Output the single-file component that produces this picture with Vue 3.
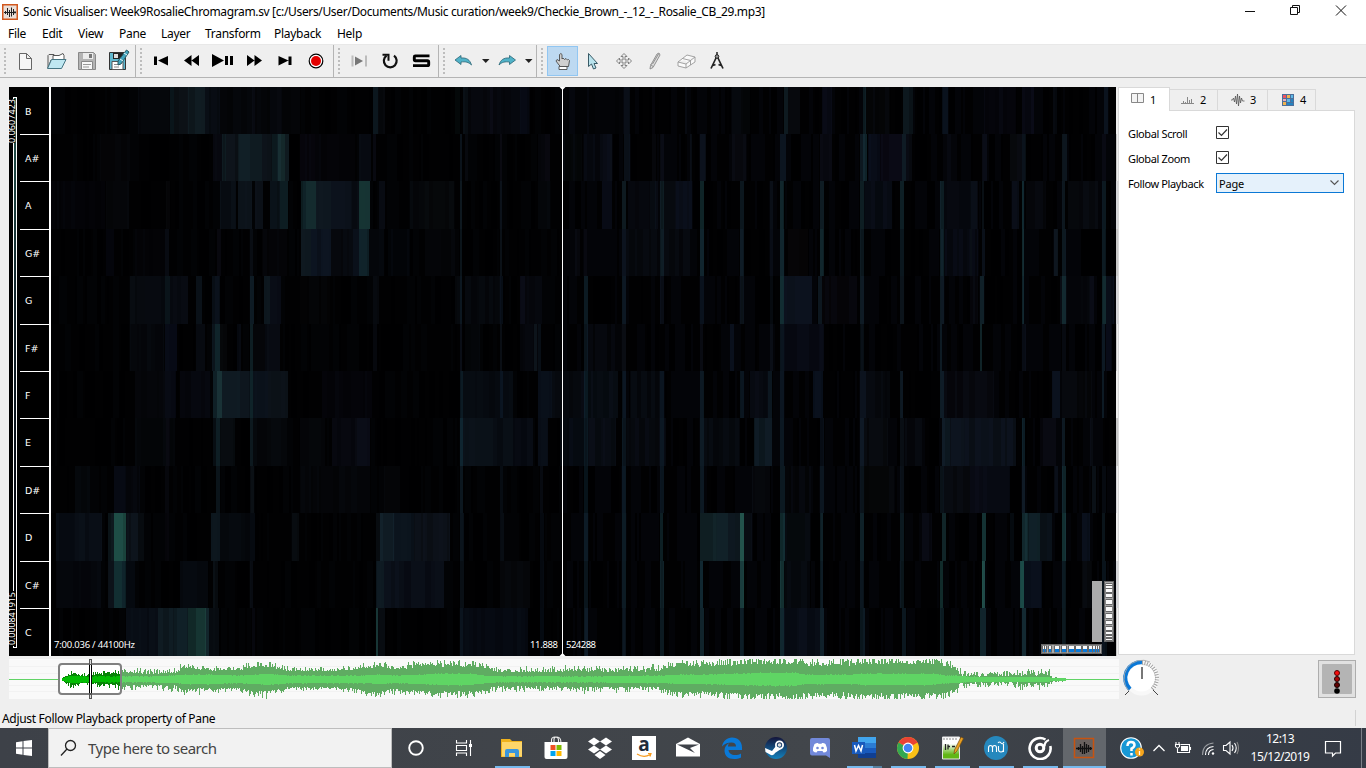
<script setup>
const menus = [
  { t: 'File', w: 34 }, { t: 'Edit', w: 36 }, { t: 'View', w: 41 }, { t: 'Pane', w: 42 },
  { t: 'Layer', w: 44 }, { t: 'Transform', w: 69 }, { t: 'Playback', w: 63 }, { t: 'Help', w: 40 },
]

const notes = ['B', 'A#', 'A', 'G#', 'G', 'F#', 'F', 'E', 'D#', 'D', 'C#', 'C']
const labelX = 25
const rowY = [87, 134, 181, 229, 276, 324, 371, 418, 466, 513, 561, 608, 656]

// Each entry is "x width colour" for one band of a pitch class.
const bands = [
  '138 32 05070b,170 4 0d1a20,174 14 0c1116,188 17 101b21,205 15 080c13,220 80 040508,252 3 080a11,270 12 07090f,373 5 0c171e,378 7 07090d,455 5 050a0b,463 5 0a1016,468 62 05060b,490 3 090912,520 9 070a14,624 6 080d14,560 64 030407,652 3 06070c,685 2 05070c,732 18 040609,784 4 0e1a20,788 12 07090d,822 10 070912,863 3 0f1f26,866 24 040506,903 6 0d181e,909 4 081013,942 6 09101a,984 32 05050b,1022 12 080913,1053 4 070a10,1104 4 0a121b',
  '100 30 040406,213 9 07080f,222 4 0f1b21,226 12 0d1319,238 12 111f25,250 12 0f1a20,262 10 0c1218,272 6 0f1e24,278 7 183033,285 4 122025,300 15 06050b,315 40 040408,359 12 070a11,373 3 080910,460 2 0b131b,465 3 06070b,500 2 09080f,538 10 05060b,545 5 08080f,562 20 040608,584 28 05070d,600 10 090c15,610 2 0b0e15,624 6 0a1018,652 4 06070b,660 4 080a10,690 2 080c12,700 6 0b111a,732 14 07080d,780 6 0b141d,820 12 090a12,860 3 0d1820,863 4 132930,868 16 090d18,880 22 080710,902 4 0e1b21,906 6 07090e,943 14 05060b,982 5 090b13,1010 15 07090c,1022 4 0a1218,1062 5 0c151b,1102 4 07070e',
  '51 54 030307,106 23 050609,166 4 060709,220 16 090e15,238 14 0c131a,255 8 0b1017,270 10 0a1219,280 8 0d1d22,301 5 0f2226,306 10 142c2e,316 15 0e171f,331 21 0b111a,352 7 090d14,359 11 163433,379 6 080b12,410 14 05070a,424 30 06080a,460 2 0e181f,500 2 0b1118,538 12 040609,602 10 080b15,622 4 0e1a20,628 30 06080e,650 6 090e15,660 4 0f1d23,664 12 070a0f,676 16 090d17,700 4 132b2f,740 4 0c171e,770 3 080d13,780 4 11262c,820 4 0f1c23,860 4 11242a,864 28 070b13,900 4 0e1f25,940 4 10232a,944 34 070910,970 7 080d14,982 2 0b1218,1012 7 080c14,1022 2 112a30,1026 20 05060a,1062 3 0d171e,1068 30 06080c,1102 4 0c1920',
  '106 8 04050b,135 30 030306,165 4 080b12,217 4 08080e,250 3 080b11,262 25 040407,301 10 0e181f,311 20 0c1420,331 22 06080d,353 6 090f18,359 10 10232a,369 15 05080d,388 22 030509,425 30 040508,460 2 0e1820,500 2 0b1117,575 5 06070c,584 3 06060b,622 4 0b121b,626 64 05070b,660 4 0f1d25,700 4 11252e,740 4 0f1c26,770 3 070b12,780 4 11272d,788 20 060507,820 4 11262c,860 4 0e1b22,900 4 0b171e,940 4 10242b,944 34 060910,970 2 090d12,982 3 0a1019,1022 2 152f34,1054 4 0d151c,1062 4 0d1920,1102 4 0d1b22',
  '130 15 070a0f,145 20 070a10,165 5 0d1920,170 18 080b12,196 6 0a1118,212 8 0a111a,250 4 0e1b24,264 6 0d171e,270 11 080b14,300 30 030304,373 6 06080c,455 5 06090d,460 2 0c1720,465 35 05070b,500 3 09101a,520 5 090a14,525 17 05060b,584 4 0c1a22,622 4 0c1720,660 4 0b101a,700 4 08101a,740 4 0b1218,770 3 080c12,780 4 122d32,784 28 0b111b,818 4 0d171f,822 35 050407,860 4 0e1b23,900 4 0c141b,940 4 0e1a21,970 8 06070c,980 4 0f2026,1022 2 122930,1060 2 090d14,1062 4 132b2f,1066 25 05070b,1090 4 080a12,1102 4 132b30,1106 8 090e18',
  '130 34 05070b,165 12 070a15,196 9 070a10,212 3 0b141b,215 5 10242a,220 7 06080a,237 4 070a11,250 3 11242a,253 12 06080b,265 15 080b12,373 4 080a10,460 2 0a0e16,465 15 040609,500 2 0a0e14,520 20 05060b,534 3 0d141b,538 3 080e15,584 4 0c1921,588 34 040509,622 4 0a0d13,700 3 090b12,730 4 080e18,770 3 080c12,780 4 0a141c,784 36 060810,820 4 080b14,860 4 080f14,940 2 0d1b22,980 2 102327,1022 4 080c14,1062 4 070a10,1102 3 0c1820,1106 6 070a14',
  '135 30 05060a,165 11 070912,180 30 05060c,213 4 0e2025,217 5 193236,222 18 0f1a22,240 10 0d151d,250 3 132a32,253 15 0a111a,268 20 0b1117,322 50 040409,460 3 0b1a23,463 50 060a10,500 3 0a1420,538 14 080e18,552 32 06090e,584 4 0d1e28,588 30 070c12,622 4 0b1620,630 30 05080c,660 4 0a141d,700 4 0c1820,740 4 0a151d,750 18 070a11,768 4 0c1720,780 4 0b151e,813 10 080f1a,860 6 0b121b,866 24 05070b,900 3 0d1820,940 4 0e1c25,944 50 06070c,1052 8 0a101b,1062 30 050609,1102 2 0c1a22',
  '135 40 040609,166 4 08080f,213 3 091016,216 4 11242b,220 15 080c10,250 3 101e25,253 34 05070a,300 25 05070a,332 25 07080f,357 13 090b15,460 3 0f2530,463 30 0a1118,493 20 080d14,513 20 070a12,538 10 080d16,560 24 050a10,584 4 0b1922,588 28 080c13,622 4 0c1922,626 40 06090e,660 4 0b1720,700 4 0d1b23,704 36 05080c,754 18 0e1b23,780 4 0b171f,820 4 090f18,860 4 0e1923,864 24 06080b,900 4 0b1119,904 18 05070b,942 8 0f1c25,950 14 0c131c,964 52 0b111a,1022 3 0f222b,1040 16 07070d,1062 3 0d1921,1090 3 080b11',
  '75 15 040609,114 12 070a13,126 14 05060b,165 4 06070c,216 4 0b141a,250 4 0a0e13,300 70 040508,384 16 040507,460 3 0c171f,500 3 070c12,540 3 070a10,584 4 091720,622 4 0b1821,660 4 0a151e,700 4 0c1820,752 18 06080c,780 5 0c1921,785 26 040508,820 4 0b151d,860 4 0b141b,864 30 050607,900 4 0a1017,940 4 0a1218,944 26 06080c,970 12 080a13,982 28 070a12,1022 3 0f1b24,1054 4 090d15,1062 4 122a30,1092 4 0a1016,1102 4 080c14',
  '56 18 080d15,74 28 090e16,108 6 0d171c,114 12 1f5048,126 12 0c131a,138 6 06090c,165 4 06060b,211 9 0c161d,220 30 05080c,250 5 080c14,292 7 070a0d,376 4 080c10,380 14 12212a,394 20 0b141d,414 36 0c1119,460 4 0b141c,500 4 070b11,540 4 070b12,584 4 0c1b24,622 4 0c1c23,660 3 10252c,700 16 122429,716 12 102126,728 12 0d171d,740 4 23534c,744 8 080c12,780 5 132f33,785 25 05090c,820 3 102229,860 4 122830,900 4 0c1920,922 10 07080f,942 4 112528,982 4 183c3d,1010 4 070d12,1022 6 152f35,1028 12 0f2026,1040 12 091016,1062 4 16383b,1082 8 080e18,1102 3 0c1820',
  '56 45 05070c,108 6 0b1117,114 8 122f32,122 4 0e242a,126 9 070b12,180 28 060a10,213 5 090e13,250 3 080b11,376 8 0e1a22,384 20 0b111b,404 40 090d16,460 4 0b131a,500 30 050609,540 4 060b12,584 4 0c1a22,622 4 0c1b22,660 4 102229,700 3 112831,740 4 1b403e,780 4 17383a,784 26 05080c,820 3 0d1c23,860 4 0c1720,900 4 0d1a20,940 3 112b2b,982 3 214f49,1020 4 1b4a47,1024 18 080e19,1062 4 0c1b22,1082 10 06080b,1102 4 0b1721',
  '126 32 080d15,158 16 0f1b22,174 14 102027,188 8 15302f,196 10 1b403c,206 3 12252a,209 10 070b10,252 3 06070d,376 2 183636,378 7 070a0e,460 4 0a131c,463 65 060a12,540 4 070c15,584 4 0e1c26,622 4 0c171f,660 4 0f2028,700 4 11242c,740 4 0e1e27,780 4 11282f,784 40 080d16,820 4 102129,860 5 0d1b23,902 4 0b171f,940 4 0f2128,980 6 10252b,1022 4 142c31,1062 4 0d1a20,1102 5 09121a',
]
let seed = 91
const rnd = () => {
  seed = (seed * 16807) % 2147483647
  return seed / 2147483647
}

const bandRects = bands.flatMap((row, i) => row.split(',').map((s) => {
  const [x, w, c] = s.split(' ')
  return { x: +x, w: +w, y: rowY[i], h: rowY[i + 1] - rowY[i], c: '#' + c }
}))

const faint = []
for (let i = 0; i < 12; i++) {
  let x = 51
  while (x < 1116) {
    const w = 2 + Math.floor(rnd() * 3) * 2
    const r = rnd()
    const right = x > 560
    if (r < 0.25) faint.push({ x, w, y: rowY[i], h: rowY[i + 1] - rowY[i], c: '#000', o: 0.16 })
    else if (r > (right ? 0.6 : 0.72)) faint.push({ x, w, y: rowY[i], h: rowY[i + 1] - rowY[i], c: '#1a2436', o: right ? 0.12 : 0.07 })
    x += w
  }
}

// Peak envelope of the recording: position, half height, inner level.
const env = [
  [62, 2, 1], [68, 8, 3], [73, 11, 4], [80, 6, 3], [88, 7, 3], [92, 9, 3], [110, 10, 3], [121, 12, 3], [150, 12, 3],
  [175, 14, 4], [183, 18, 5], [210, 14, 5], [240, 15, 4], [255, 20, 5], [268, 20, 6], [290, 13, 4],
  [330, 13, 4], [350, 15, 4], [365, 18, 4], [380, 20, 5], [395, 16, 4], [415, 19, 5], [440, 21, 6],
  [472, 21, 6], [484, 17, 4], [498, 14, 3], [550, 13, 3], [570, 16, 3], [600, 14, 3], [645, 15, 4],
  [662, 16, 4], [680, 21, 5], [700, 21, 5], [730, 23, 6], [760, 25, 7], [796, 25, 7], [805, 21, 5],
  [850, 23, 5], [862, 25, 6], [932, 25, 6], [946, 21, 4], [955, 17, 4], [962, 10, 3], [1000, 9, 2],
  [1030, 12, 2], [1049, 13, 2], [1052, 3, 1], [1064, 2, 1], [1068, 0, 0],
]
const level = (x, k) => {
  for (let i = 1; i < env.length; i++) {
    if (x <= env[i][0]) {
      const a = env[i - 1]
      const b = env[i]
      return a[k] + (b[k] - a[k]) * (x - a[0]) / (b[0] - a[0])
    }
  }
  return 0
}
const ragged = (x) => (x > 958 ? 0.75 : x < 180 ? 0.6 : x > 490 && x < 660 ? 0.52 : 0.42)
const wave = (from, to, k) => {
  let d = ''
  for (let x = from; x < to; x++) {
    const e = level(x, k)
    const s = k === 1 ? ragged(x) : 0.2
    const up = Math.min(20, Math.round(e * (1 - s * Math.sqrt(rnd()))))
    const dn = Math.min(19, Math.round(e * (0.95 - s * Math.sqrt(rnd()))))
    d += `M${x} ${679 - up}h1V${680 + dn}h-1z`
  }
  return d
}
const outer = wave(121, 1068, 1)
const inner = wave(121, 1068, 2)
const outerNear = wave(62, 121, 1)
const innerNear = wave(62, 121, 2)

const hWheel = [[2, 1], [4, 1], [8, 2], [14, 4], [21, 4], [28, 5], [35, 5], [42, 4], [48, 3], [52, 2], [55, 1], [57, 1]]
const vWheel = [[3, 1], [5, 2], [8, 3], [13, 3], [19, 4], [26, 4], [33, 4], [40, 3], [46, 3], [51, 2], [55, 1], [58, 1]]
const dialTicks = Array.from({ length: 15 }, (_, i) => 4 + i * 9.3)
</script>

<template>
  <div class="window">
    <header class="titlebar">
      <svg class="appicon" width="16" height="16" viewBox="0 0 16 16">
        <rect x="0.75" y="0.75" width="14.5" height="14.5" fill="#eadfd8" stroke="#d2571c" stroke-width="1.5" />
        <path d="M2 8.500h12M3.500 7v3M5.500 4v7M7.500 6v7M9.500 3.500v9M11.500 5v6M13 7v2.500" fill="none" stroke="#222" stroke-width="1" />
      </svg>
      <span class="title">Sonic Visualiser: Week9RosalieChromagram.sv [c:/Users/User/Documents/Music curation/week9/Checkie_Brown_-_12_-_Rosalie_CB_29.mp3]</span>
      <svg class="winbtns" width="136" height="24" viewBox="1230 0 136 24" fill="none" stroke="#111" stroke-width="1">
        <path d="M1245 11.5h10M1290.500 7.500h7v7h-7zM1292.500 7.500v-2h7v7h-2M1336 5.500l10 10M1346 5.500l-10 10" />
      </svg>
    </header>
    <nav class="menubar">
      <span v-for="m in menus" :key="m.t" :style="{ width: m.w + 'px' }">{{ m.t }}</span>
    </nav>

    <div class="toolbar">
      <div class="group">
        <i class="grip" />
        <svg class="tool" viewBox="0 0 31 30"><path d="M9.500 7.500h7l5 5v11h-12zM16.500 7.500v5h5" fill="#f6f6f6" stroke="#666" /></svg>
        <svg class="tool" viewBox="0 0 31 30"><path d="M7 22V9.500l1-1h5l2 2M7 22l3-8" fill="#eee" stroke="#555" /><path d="M12 13V9.500h6l4-2 1 2V13" fill="#fff" stroke="#555" /><path d="M6.500 22.500l4-9h14.500l-4.500 9z" fill="#bfe7f1" stroke="#447482" /></svg>
        <svg class="tool" viewBox="0 0 31 30"><path d="M6.500 6.500h15l2 2v15h-17z" fill="#b4b4b4" stroke="#888" /><path d="M11 7h10v6H11z" fill="#ececec" /><path d="M17 8h3v4h-3z" fill="#777" /><path d="M9.500 15.500h11v8h-11z" fill="#f7f7f7" stroke="#888" /><path d="M11 18.500h8M11 21h6" stroke="#999" /></svg>
        <svg class="tool" viewBox="0 0 31 30"><path d="M6.500 6.500h15l1 2v15h-16z" fill="#60b7ce" stroke="#333" /><path d="M10 7h10v6H10z" fill="#222" /><path d="M11 8h4v4h-4z" fill="#ddd" /><path d="M9 15.500h11v8H9z" fill="#fff" stroke="#555" /><path d="M11 18.500h6M11 21h5" stroke="#888" /><path d="M23.500 4l2.500 2-8 12-3 1v-4z" fill="#42a4bd" stroke="#2a5862" /><path d="M17 13l3 2M21 7l3 2" stroke="#e8f8fc" /></svg>
      </div>
      <div class="group">
        <i class="grip" />
        <svg class="tool" viewBox="0 0 31 30"><path d="M8 10.500h3v8.500H8zM22 10v9.500l-10-5z" /></svg>
        <svg class="tool" viewBox="0 0 31 30"><path d="M14.500 9v11L7 14.500zM22 9v11l-7.500-5.500z" /></svg>
        <svg class="tool" viewBox="0 0 31 30"><path d="M4 8l12 6.500L4 21zM17 10h3v9h-3zM22 10h3v9h-3z" /></svg>
        <svg class="tool" viewBox="0 0 31 30"><path d="M8 9v11l7.500-5.500zM15.500 9v11l7.500-5.500z" /></svg>
        <svg class="tool" viewBox="0 0 31 30"><path d="M18.500 10.500h3v8.500h-3zM8.500 10v9.500l10-5z" /></svg>
        <svg class="tool" viewBox="0 0 31 30"><circle cx="15" cy="15" r="6.800" fill="#fff" stroke="#000" stroke-width="1.200" /><circle cx="15" cy="15" r="5" fill="#e40000" /></svg>
      </div>
      <div class="group">
        <i class="grip" />
        <svg class="tool" viewBox="0 0 31 30"><path d="M7.500 9.500h2v11h-2zM21 9.500h2v11h-2z" fill="#bcbcbc" /><path d="M11 10.500v9l8-4.500z" fill="#777" /></svg>
        <svg class="tool" viewBox="0 0 31 30"><path d="M19 9.700a6.400 6.400 0 1 1-7.500 0" fill="none" stroke="#111" stroke-width="2.200" /><path d="M7.500 8.800h6v6" fill="none" stroke="#111" stroke-width="2" /></svg>
        <svg class="tool" viewBox="0 0 31 30"><path d="M23.500 9.900H9.300q-1 0-1 1v2.600q0 1.200 1 1.200H21.500q1.200 0 1.200 1.200v2.500q0 1.200-1.200 1.200H7" fill="none" stroke="#000" stroke-width="2.900" /></svg>
      </div>
      <div class="group">
        <i class="grip" />
        <svg class="tool" viewBox="0 0 31 30"><path d="M6 14l6-4.500v2.500c6-.5 9 2 10.500 7-3-3-6-3.500-10.500-3v2.500z" fill="#50b2c8" stroke="#296575" stroke-width=".8" /></svg>
        <svg class="arrow" viewBox="0 0 12 30"><path d="M2 13h7.500l-3.750 4z" fill="#222" /></svg>
        <svg class="tool" viewBox="0 0 31 30"><path d="M23.500 14l-6-4.500v2.500c-6-.5-9 2-10.500 7 3-3 6-3.500 10.500-3v2.500z" fill="#50b2c8" stroke="#296575" stroke-width=".8" /></svg>
        <svg class="arrow" viewBox="0 0 12 30"><path d="M2 13h7.500l-3.750 4z" fill="#222" /></svg>
      </div>
      <div class="group last">
        <i class="grip" />
        <svg class="tool on" viewBox="0 0 31 30"><path d="M12 19l-3-4 1-1.500 2.500 1.500V8.500q1.500-2 2.500 0V13l1-1 1.500 1.500 1.500-1 1.500 1.500 1-.500 1 1-1 6h-8z" fill="#d0d0d0" stroke="#4c4c4c" stroke-width=".9" /><path d="M12 20.500h8v3h-8z" fill="#fff" stroke="#4c4c4c" stroke-width=".9" /></svg>
        <svg class="tool" viewBox="0 0 31 30"><path d="M10.500 7.500v13l3-2.500 2 5 2.500-1-2-4.500h3.500z" fill="#b9e3ed" stroke="#395a66" /></svg>
        <svg class="tool" viewBox="0 0 31 30"><path d="M15 7.500l3 3h-2v3.500h3.500v-2l3 3-3 3v-2h-3.500v3.500h2l-3 3-3-3h2V16h-3.500v2l-3-3 3-3v2H14v-3.500h-2z" fill="#eee" stroke="#777" stroke-width=".9" /></svg>
        <svg class="tool" viewBox="0 0 31 30"><path d="M17 8l2-1 1 2-7 12.500-3 1.500.500-3.500zM10.500 18.500l2.500 2M12.500 18l6-10" fill="#ddd" stroke="#888" stroke-width=".9" /></svg>
        <svg class="tool" viewBox="0 0 31 30"><path d="M7 16l9-7 8 2v5l-9 6-8-2zM7 16l8 2 9-7M15 18v4M11.500 12.500l8 2v4.500" fill="#fafafa" stroke="#999" stroke-width=".9" /></svg>
        <svg class="tool" viewBox="0 0 31 30"><path d="M14.500 11L9 22.500M15.500 11L21 22.500M11 19.500l2.500-1M19 19.500l-2.500-1" fill="none" stroke="#222" stroke-width="1.700" /><path d="M15 6v4" stroke="#222" stroke-width="1.500" /><circle cx="15" cy="10.500" r="1.800" fill="#999" stroke="#222" /></svg>
      </div>
    </div>

    <main class="work">
      <div class="upper">
        <svg class="chroma" width="1107" height="569" viewBox="9 87 1107 569">
          <defs>
            <linearGradient id="scale" x1="0" y1="0" x2="0" y2="1">
              <stop offset="0" stop-color="#23564d" />
              <stop offset="0.35" stop-color="#11252b" />
              <stop offset="0.7" stop-color="#080c15" />
              <stop offset="1" stop-color="#000" />
            </linearGradient>
          </defs>
          <rect x="9" y="87" width="1107" height="569" fill="#010102" />
          <g shape-rendering="crispEdges">
            <rect v-for="(b, i) in bandRects" :key="'b' + i" :x="b.x" :y="b.y" :width="b.w" :height="b.h" :fill="b.c" />
            <rect v-for="(b, i) in faint" :key="'f' + i" :x="b.x" :y="b.y" :width="b.w" :height="b.h" :fill="b.c" :opacity="b.o" />
            <rect x="9" y="87" width="40" height="569" fill="#000" />
            <rect x="49" y="87" width="2" height="569" fill="#fff" />
            <rect v-for="y in rowY.slice(1, -1)" :key="y" x="20" :y="y" width="29" height="1" fill="#fff" />
            <rect x="13.500" y="97.500" width="3" height="550" fill="url(#scale)" stroke="#fff" />
            <rect x="9" y="99" width="6" height="44" fill="#000" />
            <rect x="9" y="591" width="6" height="55" fill="#000" />
            <rect x="562" y="87" width="1" height="569" fill="#fff" />
          </g>
          <path d="M559.500 87h6l-3 3zM559.500 656h6l-3-3z" fill="#fff" />
          <text class="tick" transform="translate(15 143) rotate(-90)" textLength="44">0.0607423</text>
          <text class="tick" transform="translate(15 645) rotate(-90)" textLength="53">0.000841915</text>
          <text v-for="(n, i) in notes" :key="n" class="note" :x="labelX" :y="rowY[i] + 28">{{ n }}</text>
          <text class="info" x="54" y="648" textLength="81">7:00.036 / 44100Hz</text>
          <text class="info" x="530" y="648" textLength="28">11.888</text>
          <text class="info" x="566" y="648" textLength="30">524288</text>
          <rect x="1092" y="581" width="10" height="61" fill="#ababab" />
          <g transform="translate(1104 581)">
            <rect width="10" height="61" fill="#666" />
            <rect x="1" y="1" width="8" height="59" fill="#aaa" />
            <rect v-for="w in vWheel" :key="w[0]" x="1.500" :y="w[0] - 1" width="7" :height="w[1] + 2" fill="#666" />
            <rect v-for="w in vWheel" :key="'w' + w[0]" x="2" :y="w[0]" width="6" :height="w[1]" fill="#fafafa" />
          </g>
          <g transform="translate(1041 644)">
            <rect width="61" height="10" fill="#666" />
            <rect x="1" y="1" width="59" height="8" fill="#aaa" />
            <rect v-for="w in hWheel" :key="w[0]" :x="w[0] - 1" y="1.500" :width="w[1] + 2" height="7" fill="#666" />
            <rect v-for="w in hWheel" :key="'w' + w[0]" :x="w[0]" y="2" :width="w[1]" height="3" fill="#fafafa" />
            <rect v-for="w in hWheel" :key="'u' + w[0]" :x="w[0]" y="5" :width="w[1]" height="3" fill="#0878d8" />
          </g>
        </svg>

        <section class="side">
          <div class="tabs">
            <span class="tab current">
              <svg width="14" height="11" viewBox="0 0 14 11"><path d="M.5.500h12v9H.5zM6.500.500v9" fill="#f4f4f4" stroke="#888" /></svg>1
            </span>
            <span class="tab t2">
              <svg width="14" height="11" viewBox="0 0 14 11"><path d="M0 9.500h13M2.500 7v2M4.500 8v1M6.500 3v6M8.500 6v3M10.500 5v4" stroke="#888" fill="none" /></svg>2
            </span>
            <span class="tab t3">
              <svg width="14" height="12" viewBox="0 0 14 12"><path d="M0 6h1.500l1-2 1 4 1-6 1 8L6.500 0l1 12 1-10 1 7 1-5 1 3h2" fill="none" stroke="#555" stroke-width=".8" /></svg>3
            </span>
            <span class="tab t4">
              <svg width="12" height="12" viewBox="0 0 12 12"><rect width="12" height="12" fill="#4c6f9b" /><path d="M1 1h3v3H1z" fill="#ef5360" /><path d="M5 1h3v3H5zM1 8h3v3H1z" fill="#efb34f" /><path d="M9 1h2v3H9zM5 5h3v3H5z" fill="#5fb9e6" /><path d="M1 5h3v2H1z" fill="#e9aebb" /><path d="M9 5h2v3H9zM5 9h6v2H5z" fill="#2583c0" /></svg>4
            </span>
          </div>
          <div class="props">
            <div class="prop"><label>Global Scroll</label><svg class="check" width="13" height="13" viewBox="0 0 13 13"><path d="M.5.500h12v12H.5z" fill="#fff" stroke="#333" /><path d="M2.500 6.500l3 3 5.500-6" fill="none" stroke="#333" stroke-width="1.200" /></svg></div>
            <div class="prop"><label>Global Zoom</label><svg class="check" width="13" height="13" viewBox="0 0 13 13"><path d="M.5.500h12v12H.5z" fill="#fff" stroke="#333" /><path d="M2.500 6.500l3 3 5.500-6" fill="none" stroke="#333" stroke-width="1.200" /></svg></div>
            <div class="prop"><label>Follow Playback</label><span class="combo">Page<svg width="9" height="6" viewBox="0 0 9 6"><path d="M.5.500l4 4 4-4" fill="none" stroke="#555" stroke-width="1.100" /></svg></span></div>
          </div>
        </section>
      </div>

      <div class="lower">
        <svg class="overview" width="1110" height="40" viewBox="9 659 1110 40">
          <rect x="9" y="659" width="1110" height="40" fill="#f9f9f9" />
          <path d="M9 666.500h1110M9 673.500h1110M9 685.500h1110M9 691.500h1110" stroke="#f2f2f2" />
          <path d="M9 679.500h1110" stroke="#61d366" />
          <rect x="59" y="664" width="62" height="30" rx="3" fill="#fff" />
          <g shape-rendering="crispEdges">
            <path :d="outer" fill="#5fac62" />
            <path :d="inner" fill="#5fd564" />
            <path :d="outerNear" fill="#078407" />
            <path :d="innerNear" fill="#03bd03" />
          </g>
          <rect x="59" y="664" width="62" height="30" rx="3" fill="none" stroke="#808080" stroke-width="2" />
          <path d="M90.500 659v40" stroke="#555" stroke-width="3" />
          <path d="M90.500 660v4M90.500 695v3" stroke="#ddd" />
          <path d="M91.500 665v28" stroke="#000" />
          <path d="M90.500 665v28" stroke="#fff" />
          <path d="M89.500 665v28" stroke="#000" />
        </svg>
        <svg class="dial" width="40" height="40" viewBox="1121 659 40 40">
          <circle cx="1141.500" cy="678" r="17.500" fill="#f8f8f8" />
          <circle cx="1141.500" cy="678" r="13.500" fill="#fff" />
          <path d="M1130 689.300A15.800 15.800 0 0 1 1142 662.200" fill="none" stroke="#0a78d7" stroke-width="4.200" />
          <path d="M1129 691A18.200 18.200 0 0 1 1150 662" fill="none" stroke="#aaa" stroke-width="0.900" />
          <path d="M1142 664.500A13.500 13.500 0 0 1 1151.500 687.500" fill="none" stroke="#ccc" stroke-width="0.800" />
          <rect v-for="a in dialTicks" :key="a" x="1141" y="660.500" width="0.900" height="4" fill="#999" :transform="`rotate(${a} 1141.500 678)`" />
          <path d="M1142 667v12" stroke="#777" stroke-width="2" />
          <path d="M1125 695l4-4M1153 690l5 5" stroke="#444" />
        </svg>
        <div class="meter">
          <svg width="30" height="30" viewBox="0 0 30 30"><rect width="30" height="30" rx="1" fill="#b4b4b4" /><circle cx="15" cy="9" r="2.500" fill="#f80c0c" stroke="#500" /><circle cx="15" cy="15" r="2.500" fill="#a90505" stroke="#200" /><circle cx="15" cy="21" r="2.500" fill="#600000" stroke="#100" /><circle cx="15" cy="27" r="2.800" fill="#000" /></svg>
        </div>
      </div>
    </main>

    <div class="status"><span>Adjust Follow Playback property of Pane</span><i /></div>

    <footer class="taskbar">
      <div class="start"><svg width="16" height="16" viewBox="0 0 16 16"><path d="M0 2.200l6.500-.9v6.200H0zM7.500 1.100L16 0v7.500H7.500zM0 8.500h6.500v6.200L0 13.800zM7.500 8.500H16V16l-8.500-1.100z" fill="#fff" /></svg></div>
      <div class="search">
        <svg width="18" height="18" viewBox="0 0 18 18"><circle cx="10.500" cy="6.500" r="5" fill="none" stroke="#222" stroke-width="1.300" /><path d="M7 10l-6 6.500" stroke="#222" stroke-width="1.300" /></svg>
        <span>Type here to search</span>
      </div>
      <div class="slot wide"><svg width="24" height="24" viewBox="0 0 24 24"><circle cx="12" cy="12" r="6.800" fill="none" stroke="#fff" stroke-width="1.900" /></svg></div>
      <div class="slot view"><svg width="24" height="24" viewBox="0 0 24 24"><path d="M4.500 4v3h10V4M4.500 20v-3h10v3M4.500 9.500h10v5h-10zM18.500 4v16" fill="none" stroke="#fff" stroke-width="1.100" /><path d="M17 8h3v3h-3z" fill="#fff" /></svg></div>
      <div class="slot run"><svg width="24" height="24" viewBox="0 0 24 24"><path d="M1 3h9l2 2h10v16H1z" fill="#f0b21d" /><path d="M2 6h20v14.500H2z" fill="#fed66a" /><path d="M5 21v-6q0-2 2-2h10q2 0 2 2v6h-4v-4H9v4z" fill="#3a96dd" /></svg></div>
      <div class="slot"><svg width="24" height="24" viewBox="0 0 24 24"><path d="M7.500 7V4q0-3 3.500-3t3.500 3v3M10 7V3q0-2 3-2 4 0 4 6" fill="none" stroke="#eee" stroke-width="1.100" /><path d="M.5 6h23v15q0 2-2 2h-19q-2 0-2-2z" fill="#fff" /><path d="M6.500 9h5v5h-5z" fill="#f05123" /><path d="M12.500 9h5v5h-5z" fill="#7fba00" /><path d="M6.500 15h5v5h-5z" fill="#00a3ef" /><path d="M12.500 15h5v5h-5z" fill="#ffb901" /></svg></div>
      <div class="slot"><svg width="24" height="24" viewBox="0 0 24 24"><path d="M6 1l6 4-6 4-6-4zM18 1l6 4-6 4-6-4zM6 9l6 4-6 4-6-4zM18 9l6 4-6 4-6-4zM12 14.500l5.500 4-5.500 4-5.500-4z" fill="#fff" transform="translate(0 .5)" /></svg></div>
      <div class="slot"><div class="amazon">a<svg width="16" height="5" viewBox="0 0 16 5"><path d="M1 1q7 4.500 13 .500M12 .500h3l-1 3" fill="none" stroke="#f79a1c" stroke-width="1.200" /></svg></div></div>
      <div class="slot"><svg width="24" height="24" viewBox="0 0 24 24"><path d="M0 8l12-6.500L24 8v12.500H0z" fill="#fff" /><path d="M1 8.500l22 0-9 3.500 5 5-18-8.500z" fill="#3e4249" /></svg></div>
      <div class="slot"><svg width="24" height="24" viewBox="0 0 24 24"><path d="M2 10.500C3 5 7 1.500 12 1.500c6 0 10 4 10 10V14H8.500c.5 3.500 3 5 6.500 5 2.500 0 4.500-.5 6-1.500v4c-2 1-4.500 1.500-7 1.500-6 0-9.500-3.500-9.500-8.500 0-3.500 2-6 5-7.500-1 1-1.500 2-1.500 3.500h8c0-2.500-1.500-4-4.500-4-4 0-7 1.500-9.500 4z" fill="#0a79d8" /></svg></div>
      <div class="slot"><svg width="24" height="24" viewBox="0 0 24 24"><defs><linearGradient id="st" x1="0" y1="0" x2="0" y2="1"><stop offset="0" stop-color="#14143a" /><stop offset="1" stop-color="#1382bd" /></linearGradient></defs><circle cx="12" cy="12" r="11" fill="url(#st)" /><circle cx="15.500" cy="9" r="3.600" fill="none" stroke="#fff" stroke-width="1.800" /><circle cx="15.500" cy="9" r="1.800" fill="#ddd" /><path d="M1 12l7 3 4-5 5 3-6 4a3.200 3.200 0 0 1-5 1.500L1.500 16z" fill="#fff" /></svg></div>
      <div class="slot"><svg width="24" height="24" viewBox="0 0 24 24"><path d="M4 2h16q2 0 2 2v18l-4-2.500H4q-2 0-2-2V4q0-2 2-2z" fill="#7289da" /><path d="M6.500 8Q9 6.500 10 7l.5.700h3L14 7q1.500-.5 3.500 1 2 4 1.500 7-1.500 1.500-3.500 1.500L14.500 15h-5l-1 1.500Q6.500 16.500 5 15q-.500-3 1.500-7z" fill="#fff" /><circle cx="9.500" cy="12" r="1.300" fill="#7289da" /><circle cx="14.500" cy="12" r="1.300" fill="#7289da" /></svg></div>
      <div class="slot run split"><svg width="24" height="24" viewBox="0 0 24 24"><path d="M6 1h18v6H6z" fill="#41a5ee" /><path d="M6 7h18v5H6z" fill="#2b7cd3" /><path d="M6 12h18v5H6z" fill="#185abd" /><path d="M6 17h18v5H6z" fill="#103f91" /><path d="M0 6h13v12H0z" fill="#185abd" /><path d="M2.500 9l1.500 6 2.500-5.500L9 15l1.500-6" fill="none" stroke="#fff" stroke-width="1.500" /></svg></div>
      <div class="slot run"><svg width="24" height="24" viewBox="0 0 24 24"><circle cx="12" cy="12" r="11" fill="#fbc116" /><path d="M12 12L2.500 6.500a11 11 0 0 1 19 0z" fill="#e94335" /><path d="M12 12l-.5 11A11 11 0 0 1 2.500 6.500z" fill="#33a852" /><path d="M12 7h9.800l-.5-1-9.300-4z" fill="#e94335" /><circle cx="12" cy="12" r="5.400" fill="#fff" /><circle cx="12" cy="12" r="4.300" fill="#4285f4" /></svg></div>
      <div class="slot run"><svg width="24" height="24" viewBox="0 0 24 24"><defs><linearGradient id="np" x1="0" y1="0" x2="0" y2="1"><stop offset="0.3" stop-color="#fff" /><stop offset="0.8" stop-color="#61b616" /></linearGradient></defs><path d="M2.500 1h17v22h-17z" fill="url(#np)" stroke="#e8e8e8" /><path d="M5.500 8v6M8 8.500v5M8 10.500h2M12 10.500h3" stroke="#222" stroke-width="1.300" /><path d="M4 2v2M7 2v2M10 2v2M13 2v2M16 2v2" stroke="#888" /><path d="M21 1l2.500 1.500L17 15l-3 3 .5-4z" fill="#eaa022" stroke="#734c12" stroke-width=".7" /></svg></div>
      <div class="slot run"><svg width="24" height="24" viewBox="0 0 24 24"><circle cx="12" cy="12" r="12" fill="#2688bd" /><path d="M4.500 16v-4q0-2.500 2-2.500t2 2.500v4M8.500 12q0-2.500 2-2.500t2 2.500v4M14.500 10v3.500q0 2.500 2.500 2.500t2.500-2.500V8M19.500 10v6M14 7q1.500-2 3 0t3-1" fill="none" stroke="#fff" stroke-width="1.100" /></svg></div>
      <div class="slot run"><svg width="24" height="24" viewBox="0 0 24 24"><path d="M17.500 3.500A10.500 10.500 0 1 0 22.300 10" fill="none" stroke="#fff" stroke-width="2.600" /><circle cx="12" cy="12" r="3.800" fill="none" stroke="#fff" stroke-width="3" /><path d="M16.500 10.500q0-5 4.500-6.500" fill="none" stroke="#fff" stroke-width="2.200" /></svg></div>
      <div class="slot run active"><svg width="22" height="22" viewBox="0 0 22 22"><rect x="1.500" y="1.500" width="19" height="19" fill="#69615e" stroke="#c75310" stroke-width="1.500" /><path d="M3 11.500h16M5.500 10v3M7.500 7v8M9.500 9v8M11.500 5v12M13.500 7v9M15.500 8v7M17.500 10v3" fill="none" stroke="#111" stroke-width="1.300" /></svg></div>

      <div class="tray">
        <svg width="138" height="24" viewBox="1112 736 138 24" fill="none" stroke="#fff" stroke-width="1.100">
          <circle cx="1131" cy="748" r="10.300" fill="#1798d5" stroke="#fff" />
          <path d="M1127.500 746q0-4 3.500-4t3.500 3q0 2-3 3.500v2.500M1131.500 753v2.500" stroke-width="2.500" />
          <circle cx="1139.500" cy="752" r="4.500" fill="#f6a51c" stroke="none" />
          <path d="M1139.500 751v4M1139.500 748.500v1" stroke-width="1.300" />
          <path d="M1153.500 751l5.500-5.500 5.500 5.500" stroke-width="1.300" />
          <path d="M1180.500 744.500h9v8h-12v-4M1190.500 747v3M1176 742v2M1179 742v2M1175.500 744.500h4v2q-2 3-4 0zM1177.500 748v5" />
          <path d="M1181.500 746.500h6v4h-6z" fill="#fff" />
          <circle cx="1213" cy="753.500" r="1.200" fill="#fff" stroke="none" />
          <path d="M1208.500 755q0-5 5-5.500M1205.500 755q0-8 8-8.500" />
          <path d="M1202.500 755q0-11 11-12" stroke="#9a9da1" />
          <path d="M1223.500 745.500h2.500l4-3.500v12l-4-3.500h-2.500zM1232 745q2 3 0 6M1234.500 743q3.500 5 0 10" />
          <path d="M1237 742q3 6 0 12" stroke="#888" />
        </svg>
        <div class="clock"><span>12:13</span><span class="date">15/12/2019</span></div>
        <svg class="bubble" width="18" height="18" viewBox="0 0 18 18"><path d="M1.500 1.500h15v11.500h-5l-3 3v-3h-7z" fill="none" stroke="#fff" stroke-width="1.200" /></svg>
      </div>
    </footer>
  </div>
</template>

<style>
html, body { margin: 0; overflow: hidden; }
</style>

<style scoped>
.window { width: 1366px; height: 768px; display: flex; flex-direction: column; background: #efefef; color: #000; font-family: "Noto Sans", "Open Sans", sans-serif; overflow: hidden; }
svg { display: block; flex: none; }
.titlebar { height: 24px; background: #fff; display: flex; align-items: center; }
.appicon { margin: 0 5px 0 2px; }
.title { font-size: 12px; letter-spacing: -0.35px; white-space: nowrap; line-height: 22px; }
.winbtns { margin-left: auto; }
.menubar { height: 20px; background: #fff; display: flex; padding-left: 8px; font-size: 12px; line-height: 20px; letter-spacing: -0.28px; white-space: nowrap; }
.menubar span { flex: none; }
.toolbar { height: 34px; box-sizing: border-box; border-top: 1px solid #e8e8e8; border-bottom: 1px solid #b4b4b4; display: flex; background: #efefef; }
.group { display: flex; align-items: center; border-right: 1px solid #b4b4b4; padding-right: 1px; }
.group.last { border: 0; }
.grip { width: 2px; height: 27px; margin: 0 4px; background: repeating-linear-gradient(#bdbdbd 0 2px, transparent 2px 4px); }
.tool { width: 31px; height: 30px; }
.tool.on { background: #bdd9f1; outline: 1px solid #91c6f2; outline-offset: -1px; }
.arrow { width: 12px; height: 30px; }
.work { height: 622px; box-sizing: border-box; padding: 9px 10px 0 9px; }
.upper { display: flex; gap: 2px; height: 572px; }
.chroma { overflow: visible; }
.side { width: 237px; height: 568px; display: flex; flex-direction: column; }
.tabs { height: 23px; display: flex; align-items: flex-end; font-size: 11px; line-height: 14px; }
.tab { height: 21px; box-sizing: border-box; border: 1px solid #d9d9d9; border-left: 0; border-bottom: 0; display: flex; align-items: center; gap: 5px; padding: 0 0 1px 12px; }
.tab.current { height: 24px; width: 52px; margin-bottom: -1px; background: #fff; border-left: 1px solid #d9d9d9; position: relative; padding-top: 1px; }
.tab.current svg { margin: -3px 0 0; }
.t2 { width: 48px; padding-left: 11px; }
.t3 { width: 50px; padding-left: 13px; }
.t4 { width: 48px; padding-left: 14px; gap: 6px; }
.props { flex: 1; background: #fff; border: 1px solid #d9d9d9; padding: 10px 10px 0 9px; font-size: 11px; letter-spacing: -0.38px; }
.prop { height: 25px; display: flex; align-items: center; }
.prop label { width: 88px; white-space: nowrap; }
.check { margin-top: -3px; }
.combo { width: 128px; height: 20px; box-sizing: border-box; border: 1px solid #0b78d5; background: #e5f1fb; display: flex; align-items: center; justify-content: space-between; padding: 1px 4px 0 2px; margin-top: -2px; letter-spacing: -0.2px; }
.lower { height: 40px; display: flex; }
.dial { margin-left: 2px; }
.meter { width: 38px; height: 38px; box-sizing: border-box; border: 1px solid #adadad; background: #e1e1e1; display: flex; align-items: center; justify-content: center; margin: 1px 0 0 auto; }
.status { height: 28px; display: flex; justify-content: space-between; padding: 0 10px 0 2px; font-size: 12px; letter-spacing: -0.31px; line-height: 37px; box-sizing: border-box; }
.status i { width: 1px; height: 16px; background: #d2d2d2; margin-top: 10px; }
.note { font: 9.500px "DejaVu Sans", sans-serif; fill: #fff; }
.info { font: 9.500px "Noto Sans", sans-serif; fill: #fff; }
.tick { font: 9px "Noto Sans", sans-serif; fill: #fff; }
.taskbar { height: 40px; display: flex; background: linear-gradient(90deg, #3d4148, #42464b 60%, #393e46 85%, #353b46); }
.start { width: 48px; display: flex; align-items: center; justify-content: center; }
.search { width: 344px; box-sizing: border-box; background: #f2f2f2; border: 1px solid #bdbdbd; display: flex; align-items: center; padding-left: 11px; gap: 10px; font-size: 15px; letter-spacing: -0.51px; color: #444; }
.slot { width: 44px; height: 40px; display: flex; align-items: center; justify-content: center; position: relative; }
.slot.wide { width: 48px; }
.slot.view { width: 50px; }
.slot.view svg { margin-left: -2px; }
.run::after { content: ""; position: absolute; left: 5px; right: 4px; bottom: 0; height: 2px; background: #76b9ed; }
.split::after { background: linear-gradient(90deg, #76b9ed 26px, #56809f 26px); }
.active { background: linear-gradient(90deg, transparent 1px, #63676c 1px); }
.active::after { left: 1px; right: 0; }
.amazon { width: 24px; height: 24px; background: #fff; color: #222c3a; font: bold 19px/17px "Open Sans", sans-serif; text-align: center; }
.amazon svg { margin: 0 auto; }
.tray { width: 256px; margin-left: auto; box-sizing: border-box; display: flex; align-items: center; padding-left: 6px; border-right: 1px solid #7b8088; margin-right: 4px; color: #fff; }
.clock { width: 60px; display: flex; flex-direction: column; align-items: center; font-size: 12px; letter-spacing: -0.5px; line-height: 18px; }
.bubble { margin: 1px 0 0 14px; }
</style>
